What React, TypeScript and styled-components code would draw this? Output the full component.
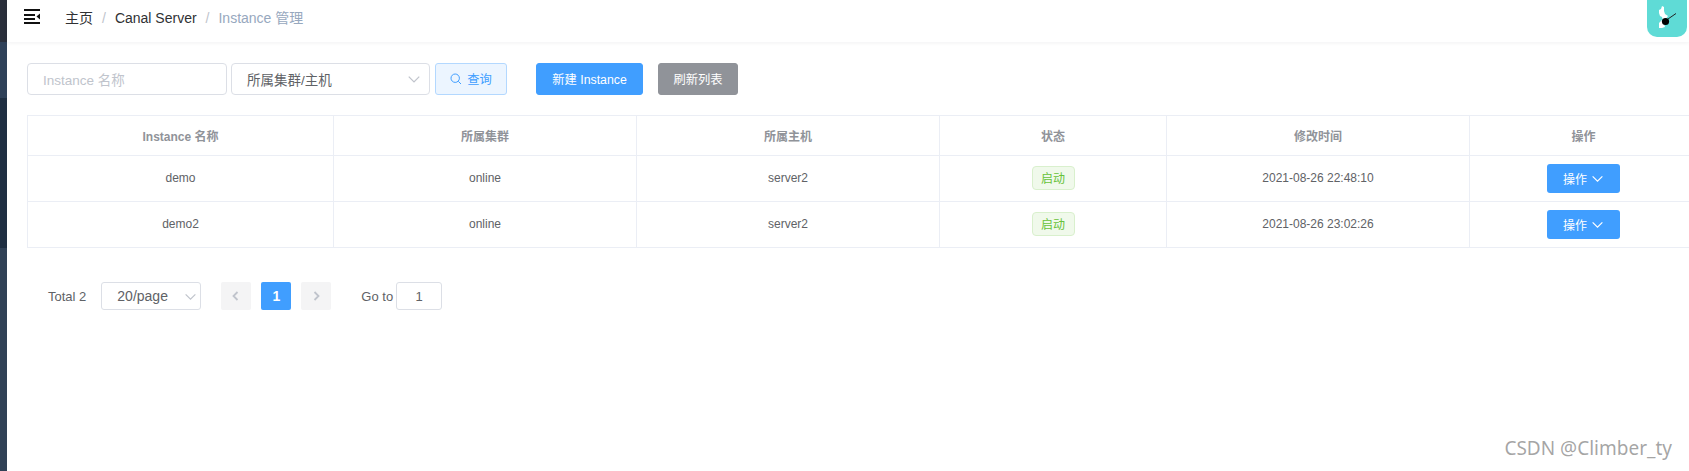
import React from "react";
import styled, { createGlobalStyle } from "styled-components";

const FONT = `"Liberation Sans", "Noto Sans CJK SC", sans-serif`;

const Global = createGlobalStyle`
  html, body { margin: 0; padding: 0; background: #fff; }
  body { font-family: ${FONT}; width: 1689px; height: 471px; overflow: hidden; }
  * { box-sizing: border-box; }
`;

const Page = styled.div`
  display: flex;
  width: 1689px;
  height: 471px;
  overflow: hidden;
  position: relative;
`;
const Sidebar = styled.div`
  width: 7px;
  flex: none;
  display: flex;
  flex-direction: column;
`;
const SideBlock = styled.div<{ $h: number; $c: string }>`
  height: ${(p) => p.$h}px;
  background: ${(p) => p.$c};
`;
const Main = styled.div`
  flex: 1;
  min-width: 0;
`;
const Header = styled.header`
  height: 42px;
  display: flex;
  align-items: center;
  padding: 0 0 0 17px;
  box-shadow: 0 1px 4px rgba(0, 21, 41, 0.06);
  position: relative;
`;
const Burger = styled.svg`
  width: 16px;
  height: 15px;
  margin-top: -10px;
  flex: none;
`;
const Crumbs = styled.nav`
  display: flex;
  align-items: baseline;
  font-size: 14px;
  margin-left: 25px;
  margin-top: -8px;
  color: #303133;
`;
const Crumb = styled.span<{ $last?: boolean }>`
  color: ${(p) => (p.$last ? "#97a8be" : "#303133")};
`;
const Sep = styled.span`
  color: #c0c4cc;
  margin: 0 9px;
`;
const Avatar = styled.div`
  position: absolute;
  right: 2px;
  top: 0;
  width: 40px;
  height: 37px;
  background: #5fdbd6;
  border-radius: 0 0 10px 10px;
`;
const Content = styled.div`
  padding: 21px 0 0 20px;
`;
const Filters = styled.div`
  display: flex;
  align-items: flex-start;
  height: 32px;
`;
const InputBox = styled.div<{ $w: number; $c: string }>`
  width: ${(p) => p.$w}px;
  height: 32px;
  border: 1px solid #dcdfe6;
  border-radius: 4px;
  font-size: 13.5px;
  color: ${(p) => p.$c};
  display: flex;
  align-items: center;
  justify-content: space-between;
  padding: 0 8px 0 15px;
  margin-right: 4px;
`;
const Button = styled.div<{ $bg: string; $fg: string; $border: string; $w: number; $ml: number }>`
  width: ${(p) => p.$w}px;
  height: 32px;
  margin-left: ${(p) => p.$ml}px;
  background: ${(p) => p.$bg};
  color: ${(p) => p.$fg};
  border: 1px solid ${(p) => p.$border};
  border-radius: 3px;
  font-size: 12.3px;
  display: flex;
  align-items: center;
  justify-content: center;
  gap: 5px;
`;
const Table = styled.div`
  margin-top: 20px;
  width: 1671px;
  border-top: 1px solid #ebeef5;
  border-left: 1px solid #ebeef5;
`;
const Row = styled.div<{ $h: number }>`
  display: grid;
  grid-template-columns: 306px 303px 303px 227px 303px 1fr;
  height: ${(p) => p.$h}px;
`;
const Cell = styled.div<{ $head?: boolean; $lift?: boolean }>`
  display: flex;
  align-items: center;
  justify-content: center;
  font-size: 12px;
  color: ${(p) => (p.$head ? "#909399" : "#606266")};
  font-weight: ${(p) => (p.$head ? 700 : 400)};
  padding-bottom: ${(p) => (p.$lift ? "2px" : "0")};
  border-right: 1px solid #ebeef5;
  border-bottom: 1px solid #ebeef5;
`;
const Tag = styled.span`
  width: 43px;
  height: 24px;
  display: flex;
  align-items: center;
  justify-content: center;
  background: #f0f9eb;
  border: 1px solid #d9f0cd;
  border-radius: 4px;
  color: #67c23a;
  font-size: 12px;
`;
const OpButton = styled.div`
  width: 73px;
  height: 29px;
  background: #409eff;
  color: #fff;
  border-radius: 3px;
  font-size: 12px;
  display: flex;
  align-items: center;
  justify-content: center;
  gap: 4px;
`;
const Pager = styled.div`
  display: flex;
  align-items: center;
  margin: 34px 0 0 21px;
  height: 28px;
  font-size: 13px;
  color: #606266;
`;
const PageSize = styled.div`
  width: 100px;
  height: 28px;
  margin-left: 15px;
  border: 1px solid #dcdfe6;
  border-radius: 3px;
  font-size: 14px;
  display: flex;
  align-items: center;
  justify-content: space-between;
  padding: 0 3px 0 15px;
`;
const PageBtn = styled.div<{ $active?: boolean; $ml: number }>`
  width: 30px;
  height: 28px;
  margin-left: ${(p) => p.$ml}px;
  background: ${(p) => (p.$active ? "#409eff" : "#f4f4f5")};
  color: ${(p) => (p.$active ? "#fff" : "#c0c4cc")};
  border-radius: 2px;
  font-weight: 700;
  font-size: 14px;
  display: flex;
  align-items: center;
  justify-content: center;
`;
const GoTo = styled.span`
  margin-left: 30px;
`;
const GoInput = styled.div`
  width: 46px;
  height: 28px;
  margin-left: 3px;
  border: 1px solid #dcdfe6;
  border-radius: 3px;
  display: flex;
  align-items: center;
  justify-content: center;
`;
const Watermark = styled.div`
  position: absolute;
  right: 17px;
  bottom: 10px;
  font-family: "Noto Sans", sans-serif;
  font-size: 19px;
  color: rgba(130, 130, 130, 0.72);
`;

const Chevron = ({ size = 12, dir = "down", color = "#c0c4cc" }: { size?: number; dir?: "down" | "left" | "right"; color?: string }) => {
  const d = dir === "down" ? "M1.5 4 L6 8.5 L10.5 4" : dir === "left" ? "M7.5 2 L3.5 6 L7.5 10" : "M4.5 2 L8.5 6 L4.5 10";
  return (
    <svg width={size} height={size} viewBox="0 0 12 12" fill="none" stroke={color} strokeWidth={dir === "down" ? 1.1 : 1.8}>
      <path d={d} />
    </svg>
  );
};

const rows = [
  { name: "demo", time: "2021-08-26 22:48:10" },
  { name: "demo2", time: "2021-08-26 23:02:26" },
];

export default function App() {
  return (
    <Page>
      <Global />
      <Sidebar>
        <SideBlock $h={42} $c="#2a2f3b" />
        <SideBlock $h={56} $c="#2f4159" />
        <SideBlock $h={150} $c="#1f2f42" />
        <SideBlock $h={223} $c="#304156" />
      </Sidebar>
      <Main>
        <Header>
          <Burger viewBox="0 0 16 15">
            <path d="M0 0h16v2H0zM0 5h11v2H0zM0 9h11v2H0zM0 13h16v2H0z" fill="#111" />
            <path d="M16 4.5v6l-3.5-3z" fill="#111" />
          </Burger>
          <Crumbs>
            <Crumb>主页</Crumb>
            <Sep>/</Sep>
            <Crumb>Canal Server</Crumb>
            <Sep>/</Sep>
            <Crumb $last>Instance 管理</Crumb>
          </Crumbs>
          <Avatar>
            <svg width="40" height="37" viewBox="0 0 40 37">
              <path d="M12 10l2-1 1-3 2 1 0 4 1 3 3 2-3 4-2 0-1-3-2-1-1-3z" fill="#fff" />
              <path d="M12 23l3-3 2 4 1 3-3 1-3 0z" fill="#fff" />
              <circle cx="18.5" cy="21.5" r="3.6" fill="#000" />
              <path d="M21 19l8-5.5" stroke="#222" strokeWidth="1" />
            </svg>
          </Avatar>
        </Header>
        <Content>
          <Filters>
            <InputBox $w={200} $c="#c0c4cc">Instance 名称</InputBox>
            <InputBox $w={199} $c="#606266">
              所属集群/主机
              <Chevron size={14} />
            </InputBox>
            <Button $w={72} $ml={1} $bg="#ecf5ff" $fg="#409eff" $border="#b3d8ff">
              <svg width="12" height="12" viewBox="0 0 12 12" fill="none" stroke="#409eff" strokeWidth="1">
                <circle cx="5.2" cy="5.2" r="4.2" />
                <path d="M8.3 8.3L11 11" />
              </svg>
              查询
            </Button>
            <Button $w={107} $ml={29} $bg="#409eff" $fg="#fff" $border="#409eff">新建 Instance</Button>
            <Button $w={80} $ml={15} $bg="#909399" $fg="#fff" $border="#909399">刷新列表</Button>
          </Filters>
          <Table>
            <Row $h={40}>
              {["Instance 名称", "所属集群", "所属主机", "状态", "修改时间", "操作"].map((h) => (
                <Cell $head key={h}>{h}</Cell>
              ))}
            </Row>
            {rows.map((r) => (
              <Row $h={46} key={r.name}>
                <Cell $lift>{r.name}</Cell>
                <Cell $lift>online</Cell>
                <Cell $lift>server2</Cell>
                <Cell $lift><Tag>启动</Tag></Cell>
                <Cell $lift>{r.time}</Cell>
                <Cell>
                  <OpButton>
                    操作
                    <Chevron size={13} color="#fff" />
                  </OpButton>
                </Cell>
              </Row>
            ))}
          </Table>
          <Pager>
            <span>Total 2</span>
            <PageSize>
              20/page
              <Chevron size={13} />
            </PageSize>
            <PageBtn $ml={20}><Chevron dir="left" /></PageBtn>
            <PageBtn $ml={10} $active>1</PageBtn>
            <PageBtn $ml={10}><Chevron dir="right" /></PageBtn>
            <GoTo>Go to</GoTo>
            <GoInput>1</GoInput>
          </Pager>
        </Content>
      </Main>
      <Watermark>CSDN @Climber_ty</Watermark>
    </Page>
  );
}
